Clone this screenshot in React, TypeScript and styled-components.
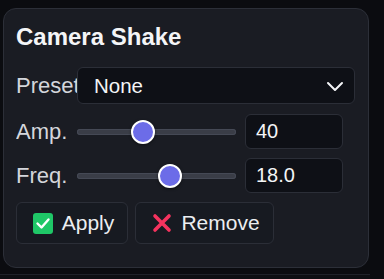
import React from 'react';
import styled, { createGlobalStyle } from 'styled-components';

const GlobalStyle = createGlobalStyle`
  html, body {
    margin: 0;
    padding: 0;
    background: #0b0c10;
    font-family: "Liberation Sans", Arial, sans-serif;
  }
  #root {
    padding: 8px 0 0 3px;
  }
`;

const Card = styled.div`
  width: 366px;
  height: 260px;
  box-sizing: border-box;
  background: #1a1c23;
  border: 1px solid #2c2f38;
  border-radius: 13px;
  padding: 13px 13px 0 12px;
  display: flex;
  flex-direction: column;
`;

const Title = styled.h2`
  margin: 0 0 15px 0;
  font-size: 24px;
  line-height: 30px;
  font-weight: 700;
  color: #f4f5f7;
`;

const Row = styled.div<{ $h: number; $mb: number }>`
  display: flex;
  align-items: center;
  height: ${(p) => p.$h}px;
  margin-bottom: ${(p) => p.$mb}px;
`;

const Label = styled.span`
  width: 61px;
  flex: none;
  overflow: hidden;
  white-space: nowrap;
  font-size: 22px;
  color: #d4d6db;
`;

const Select = styled.div`
  flex: 1;
  height: 100%;
  box-sizing: border-box;
  background: #0e1016;
  border: 1px solid #2b2e37;
  border-radius: 6px;
  display: flex;
  align-items: center;
  justify-content: space-between;
  padding: 0 10px 0 16px;
  font-size: 20.5px;
  color: #f4f5f7;
`;

const Track = styled.div`
  position: relative;
  width: 159px;
  height: 6px;
  border-radius: 3px;
  background: #3a3d47;
  box-shadow: inset 0 0 0 1px #454955;
  flex: none;
`;

const Thumb = styled.div`
  position: absolute;
  top: 50%;
  width: 20px;
  height: 20px;
  margin-top: -12px;
  border-radius: 50%;
  background: #6c6ce8;
  border: 2px solid #ffffff;
  box-shadow: 0 1px 3px rgba(0, 0, 0, 0.5);
`;

const NumInput = styled.div`
  margin-left: 9px;
  width: 98px;
  height: 100%;
  box-sizing: border-box;
  background: #0e1016;
  border: 1px solid #2b2e37;
  border-radius: 6px;
  display: flex;
  align-items: center;
  padding-left: 10px;
  font-size: 20px;
  color: #f4f5f7;
`;

const Buttons = styled.div`
  display: flex;
  gap: 7px;
  height: 42px;
`;

const Button = styled.button<{ $w: number }>`
  width: ${(p) => p.$w}px;
  height: 100%;
  box-sizing: border-box;
  background: #171a21;
  border: 1px solid #2b2e37;
  border-radius: 6px;
  display: flex;
  align-items: center;
  justify-content: center;
  gap: 9px;
  font-family: inherit;
  font-size: 21px;
  color: #eceef1;
  padding: 0 0 0 3px;
`;

const Below = styled.div`
  width: 370px;
  height: 6px;
  margin: 6px 0 0 -3px;
  border-top: 1px solid #1f2229;
  background: #0e0f13;
`;

const Slider = ({ value, min, max }: { value: number; min: number; max: number }) => {
  const f = (value - min) / (max - min);
  return (
    <Track>
      <Thumb style={{ left: `${f * 135}px` }} />
    </Track>
  );
};

const CheckIcon = () => (
  <svg width="20" height="21" viewBox="0 0 20 21">
    <rect x="0" y="0" width="20" height="21" rx="3" fill="#1fc767" />
    <path d="M4.5 10.5 L8.5 14.5 L15.5 6.5" fill="none" stroke="#fff" strokeWidth="2.4" strokeLinecap="round" strokeLinejoin="round" />
  </svg>
);

const CrossIcon = () => (
  <svg width="20" height="20" viewBox="0 0 20 20">
    <path d="M3 3 L17 17 M17 3 L3 17" stroke="#f5335e" strokeWidth="3.6" strokeLinecap="round" />
  </svg>
);

const Chevron = () => (
  <svg width="18" height="12" viewBox="0 0 18 12">
    <path d="M2 3 L9 10 L16 3" fill="none" stroke="#f4f5f7" strokeWidth="2" strokeLinecap="round" strokeLinejoin="round" />
  </svg>
);

export default function App() {
  return (
    <>
      <GlobalStyle />
      <Card>
        <Title>Camera Shake</Title>
        <Row $h={37} $mb={10}>
          <Label>Preset</Label>
          <Select>
            <span>None</span>
            <Chevron />
          </Select>
        </Row>
        <Row $h={35} $mb={9}>
          <Label>Amp.</Label>
          <Slider value={40} min={0} max={100} />
          <NumInput>40</NumInput>
        </Row>
        <Row $h={35} $mb={9}>
          <Label>Freq.</Label>
          <Slider value={18} min={0} max={30} />
          <NumInput>18.0</NumInput>
        </Row>
        <Buttons>
          <Button $w={112}>
            <CheckIcon />
            Apply
          </Button>
          <Button $w={139}>
            <CrossIcon />
            Remove
          </Button>
        </Buttons>
      </Card>
      <Below />
    </>
  );
}
